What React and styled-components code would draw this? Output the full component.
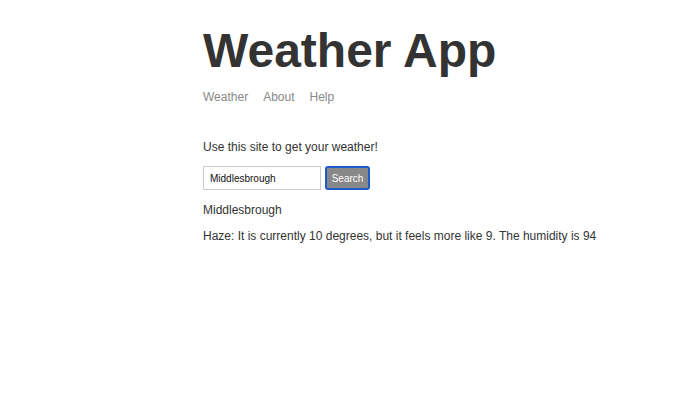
import React from "react";
import styled, { createGlobalStyle } from "styled-components";

const Global = createGlobalStyle`
  html, body { margin: 0; padding: 0; background: #fff; }
  body {
    color: #333;
    font-family: "Liberation Sans", Arial, sans-serif;
    font-size: 12px;
  }
`;

const Main = styled.div`
  padding: 23px 16px 0 203px;
`;

const Header = styled.header`
  margin-bottom: 36px;
`;

const Title = styled.h1`
  margin: 0 0 12px;
  font-size: 48px;
  font-weight: bold;
  line-height: normal;
`;

const Nav = styled.nav`
  display: flex;
  gap: 15px;
`;

const NavLink = styled.a`
  color: #888;
  text-decoration: none;
  font-size: 12px;
  line-height: 14px;
`;

const Text = styled.p`
  margin: 0 0 12px;
  font-size: 12px;
  line-height: 14px;
`;

const Form = styled.form`
  display: flex;
  align-items: center;
  gap: 4px;
  margin: 0 0 13px;
`;

const Input = styled.input`
  box-sizing: border-box;
  width: 118px;
  height: 24px;
  border: 1px solid #ccc;
  padding: 0 6px;
  font-family: "Liberation Sans", Arial, sans-serif;
  font-size: 10px;
  color: #111;
  outline: none;
`;

const Button = styled.button`
  box-sizing: border-box;
  height: 24px;
  width: 45px;
  padding: 0;
  border: 2px solid #1c5bc8;
  border-radius: 3px;
  background: #888;
  box-shadow: inset 0 0 0 1px #888;
  color: #fff;
  font-family: "Liberation Sans", Arial, sans-serif;
  font-size: 10px;
  cursor: pointer;
`;

export default function App() {
  return (
    <>
      <Global />
      <Main>
        <Header>
          <Title>Weather App</Title>
          <Nav>
            <NavLink href="#">Weather</NavLink>
            <NavLink href="#">About</NavLink>
            <NavLink href="#">Help</NavLink>
          </Nav>
        </Header>
        <Text>Use this site to get your weather!</Text>
        <Form onSubmit={(e) => e.preventDefault()}>
          <Input defaultValue="Middlesbrough" placeholder="Location" />
          <Button type="submit">Search</Button>
        </Form>
        <Text>Middlesbrough</Text>
        <Text>Haze: It is currently 10 degrees, but it feels more like 9. The humidity is 94</Text>
      </Main>
    </>
  );
}
